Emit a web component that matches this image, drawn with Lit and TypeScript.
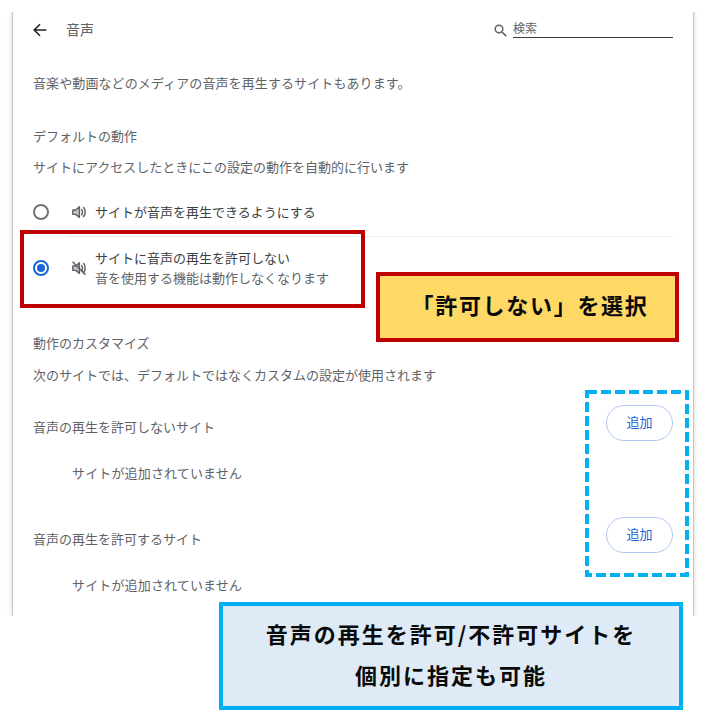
import { LitElement, html, css, svg } from "lit";
import { customElement } from "lit/decorators.js";

const speakerBody = svg`<path d="M1.8 6h2.9L8.4 2.8v10.6L4.7 10.4H1.8z" fill="#c4c6c9" stroke="#5f6368" stroke-width="1.4" stroke-linejoin="round"/>`;
const speakerWaves = svg`<path d="M10.6 5.6c1.1.9 1.1 4.3 0 5.2M12.6 3.6c2.1 2.2 2.1 6.8 0 9" fill="none" stroke="#5f6368" stroke-width="1.5" stroke-linecap="round"/>`;

@customElement("app-root")
export class AppRoot extends LitElement {
  static styles = css`
    :host {
      display: block;
      position: relative;
      width: 711px;
      height: 724px;
      background: #fff;
      font-family: "Noto Sans CJK JP", "Liberation Sans", sans-serif;
      font-size: 13px;
      color: #3c4043;
      overflow: hidden;
    }
    .panel {
      box-sizing: border-box;
      margin: 12px 0 0 13px;
      width: 680px;
      height: 604px;
      padding: 0 20px;
      background: #fff;
      box-shadow: 0 0 1px 1px rgba(0, 0, 0, 0.16), 0 0 6px 1px rgba(0, 0, 0, 0.12);
      clip-path: inset(0 -12px 0 -12px);
      overflow: hidden;
    }
    .header {
      display: flex;
      align-items: center;
      height: 36px;
    }
    .back { width: 14px; height: 14px; display: block; margin-right: 19px; }
    .title { flex: 1; color: #5f6368; font-size: 14px; line-height: 18px; padding-bottom: 2px; }
    .search-icon { width: 13px; height: 13px; display: block; margin-right: 6px; }
    .search {
      box-sizing: border-box;
      width: 160px;
      height: 20px;
      line-height: 20px;
      font-size: 12px;
      color: #5f6368;
      border-bottom: 1px solid #3c4043;
      transform: translateY(-2px);
    }
    .line { height: 20px; line-height: 20px; white-space: nowrap; }
    .up { line-height: 18px; }
    .wide { letter-spacing: 0.1px; }
    .sub { color: #5f6368; }
    .mt-26 { margin-top: 26px; }
    .mt-32 { margin-top: 32px; }
    .mt-12 { margin-top: 12px; }
    .mt-34 { margin-top: 34px; }
    .mt-14 { margin-top: 14px; }
    .mt-20 { margin-top: 20px; }
    .radio-row { display: flex; align-items: center; }
    .radio-row.first { height: 48px; margin-top: 10px; }
    .radio-row.first .label { line-height: 20px; padding-bottom: 1px; }
    .radio-row.second { height: 62px; }
    .radio {
      box-sizing: border-box;
      width: 16px;
      height: 16px;
      border-radius: 50%;
      border: 2px solid #70757a;
      flex: none;
      display: flex;
      align-items: center;
      justify-content: center;
    }
    .radio.on { border-color: #1a66d6; }
    .radio.on::after {
      content: "";
      width: 8px;
      height: 8px;
      border-radius: 50%;
      background: #1a66d6;
    }
    .sound { width: 16px; height: 16px; flex: none; margin: 0 8px 0 22px; }
    .divider { height: 1px; background: #eeeeee; margin-left: 36px; }
    .two { line-height: 20px; }
    .two div { height: 20px; white-space: nowrap; }
    .add-row { display: flex; justify-content: space-between; align-items: center; height: 44px; }
    .add-row .label { line-height: 20px; padding-bottom: 1px; }
    .add {
      box-sizing: border-box;
      align-self: flex-start;
      width: 67px;
      height: 36px;
      border-radius: 18px;
      border: 1px solid #b0c8f2;
      color: #1a66d6;
      display: flex;
      align-items: center;
      justify-content: center;
      font-size: 13px;
      line-height: 18px;
      padding-bottom: 2px;
    }
    .empty { padding-left: 39px; letter-spacing: 0.15px; }
    .note {
      position: absolute;
      box-sizing: border-box;
      display: flex;
      align-items: center;
      justify-content: center;
      color: #0a0a0a;
      font-weight: 700;
      text-align: center;
    }
    .red-frame { left: 20px; top: 230px; width: 345px; height: 78px; border: 4px solid #c00000; }
    .yellow {
      left: 376px; top: 272px; width: 303px; height: 70px;
      border: 4px solid #c00000;
      background: #ffd966;
      font-size: 22px;
      letter-spacing: 1.7px;
      padding: 0 0 7px 5px;
    }
    .dashed { position: absolute; left: 585px; top: 390px; width: 104px; height: 187px; display: block; }
    .blue {
      left: 219px; top: 602px; width: 464px; height: 108px;
      border: 4px solid #00b0f0;
      background: #deeaf6;
      font-size: 22px;
      line-height: 41px;
      letter-spacing: 2px;
      padding-bottom: 5px;
    }
  `;

  render() {
    return html`
      <div class="panel">
        <div class="header">
          <svg class="back" viewBox="0 0 14 14">
            <path d="M13.4 7H1.6M7 1.2 1.2 7 7 12.8" fill="none" stroke="#202124" stroke-width="1.6"/>
          </svg>
          <span class="title">音声</span>
          <svg class="search-icon" viewBox="0 0 13 13">
            <circle cx="5" cy="5" r="3.8" fill="none" stroke="#5f6368" stroke-width="1.5"/>
            <path d="M8 8l4.2 4.2" stroke="#5f6368" stroke-width="1.7"/>
          </svg>
          <div class="search">検索</div>
        </div>
        <div class="line up wide sub mt-26">音楽や動画などのメディアの音声を再生するサイトもあります。</div>
        <div class="line sub mt-32">デフォルトの動作</div>
        <div class="line up sub mt-12">サイトにアクセスしたときにこの設定の動作を自動的に行います</div>
        <div class="radio-row first">
          <span class="radio"></span>
          <svg class="sound" viewBox="0 0 16 16">${speakerBody}${speakerWaves}</svg>
          <span class="label">サイトが音声を再生できるようにする</span>
        </div>
        <div class="divider"></div>
        <div class="radio-row second">
          <span class="radio on"></span>
          <svg class="sound" viewBox="0 0 16 16">
            ${speakerBody}${speakerWaves}
            <path d="M1.6 1.8l12.8 12.8" stroke="#5f6368" stroke-width="1.5"/>
          </svg>
          <div class="two">
            <div>サイトに音声の再生を許可しない</div>
            <div class="sub">音を使用する機能は動作しなくなります</div>
          </div>
        </div>
        <div class="line sub mt-34">動作のカスタマイズ</div>
        <div class="line sub mt-12">次のサイトでは、デフォルトではなくカスタムの設定が使用されます</div>
        <div class="add-row mt-20">
          <span class="sub label">音声の再生を許可しないサイト</span>
          <div class="add">追加</div>
        </div>
        <div class="line sub empty mt-14">サイトが追加されていません</div>
        <div class="add-row mt-34">
          <span class="sub label">音声の再生を許可するサイト</span>
          <div class="add">追加</div>
        </div>
        <div class="line sub empty mt-14">サイトが追加されていません</div>
      </div>
      <div class="note red-frame"></div>
      <div class="note yellow">「許可しない」を選択</div>
      <svg class="dashed" viewBox="0 0 104 187">
        <rect x="2" y="2" width="100" height="183" fill="none" stroke="#00b0f0" stroke-width="4" stroke-dasharray="10 4"/>
      </svg>
      <div class="note blue">音声の再生を許可/不許可サイトを<br />個別に指定も可能</div>
    `;
  }
}
